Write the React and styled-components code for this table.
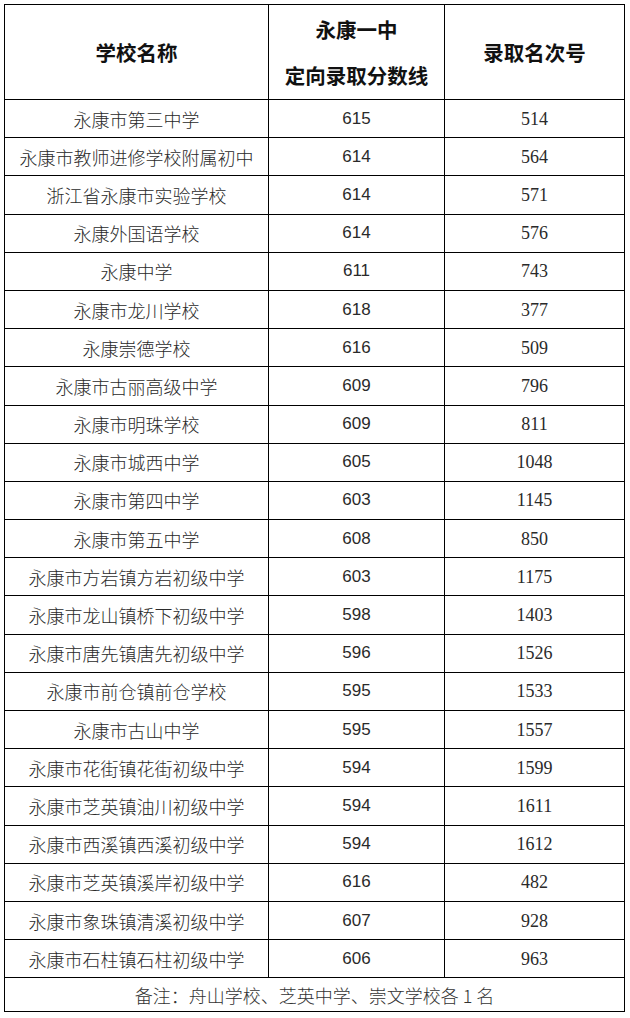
import React from "react";
import styled, { createGlobalStyle } from "styled-components";

const rows = [
  ["永康市第三中学", "615", "514"],
  ["永康市教师进修学校附属初中", "614", "564"],
  ["浙江省永康市实验学校", "614", "571"],
  ["永康外国语学校", "614", "576"],
  ["永康中学", "611", "743"],
  ["永康市龙川学校", "618", "377"],
  ["永康崇德学校", "616", "509"],
  ["永康市古丽高级中学", "609", "796"],
  ["永康市明珠学校", "609", "811"],
  ["永康市城西中学", "605", "1048"],
  ["永康市第四中学", "603", "1145"],
  ["永康市第五中学", "608", "850"],
  ["永康市方岩镇方岩初级中学", "603", "1175"],
  ["永康市龙山镇桥下初级中学", "598", "1403"],
  ["永康市唐先镇唐先初级中学", "596", "1526"],
  ["永康市前仓镇前仓学校", "595", "1533"],
  ["永康市古山中学", "595", "1557"],
  ["永康市花街镇花街初级中学", "594", "1599"],
  ["永康市芝英镇油川初级中学", "594", "1611"],
  ["永康市西溪镇西溪初级中学", "594", "1612"],
  ["永康市芝英镇溪岸初级中学", "616", "482"],
  ["永康市象珠镇清溪初级中学", "607", "928"],
  ["永康市石柱镇石柱初级中学", "606", "963"],
];

const GlobalStyle = createGlobalStyle`
  html, body {
    margin: 0;
    padding: 0;
    background: #fff;
  }
  body {
    font-family: "Noto Sans CJK SC", sans-serif;
    color: #222;
  }
`;

const Page = styled.div`
  padding: 4px;
`;

const Table = styled.table`
  width: 620px;
  table-layout: fixed;
  border-collapse: collapse;
  border: 1.5px solid #000;
`;

const Col = styled.col`
  width: ${(p) => p.$w}px;
`;

const HeadCell = styled.th`
  height: 94px;
  padding: 0;
  border: 1px solid #000;
  font-family: "Noto Sans CJK SC", sans-serif;
  font-size: 20.5px;
  font-weight: 700;
  color: #111;
  text-align: center;
  vertical-align: middle;
  line-height: 46px;
`;

const Row = styled.tr`
  height: 38.2px;
`;

const Cell = styled.td`
  padding: 0;
  border: 1px solid #000;
  text-align: center;
  vertical-align: middle;
  font-size: ${(p) => (p.$kind === "rank" ? 18 : p.$kind === "score" ? 17 : 18)}px;
  line-height: 20px;
  color: #2a2a2a;
  font-family: ${(p) =>
    p.$kind === "score"
      ? `"Liberation Sans", Arial, sans-serif`
      : p.$kind === "rank"
      ? `"Liberation Serif", "Times New Roman", serif`
      : `"Noto Sans CJK SC", sans-serif`};
  font-weight: ${(p) => (p.$kind === "name" ? 300 : 400)};
`;

const NoteCell = styled.td`
  height: 33px;
  padding: 0;
  border: 1px solid #000;
  text-align: center;
  vertical-align: middle;
  font-size: 18px;
  font-weight: 300;
  color: #333;
`;

export default function App() {
  return (
    <Page>
      <GlobalStyle />
      <Table>
        <colgroup>
          <Col $w={264} />
          <Col $w={176} />
          <Col $w={180} />
        </colgroup>
        <thead>
          <tr>
            <HeadCell>学校名称</HeadCell>
            <HeadCell>
              永康一中
              <br />
              定向录取分数线
            </HeadCell>
            <HeadCell>录取名次号</HeadCell>
          </tr>
        </thead>
        <tbody>
          {rows.map(([name, score, rank]) => (
            <Row key={name}>
              <Cell $kind="name">{name}</Cell>
              <Cell $kind="score">{score}</Cell>
              <Cell $kind="rank">{rank}</Cell>
            </Row>
          ))}
          <tr>
            <NoteCell colSpan={3}>备注：舟山学校、芝英中学、崇文学校各 1 名</NoteCell>
          </tr>
        </tbody>
      </Table>
    </Page>
  );
}
